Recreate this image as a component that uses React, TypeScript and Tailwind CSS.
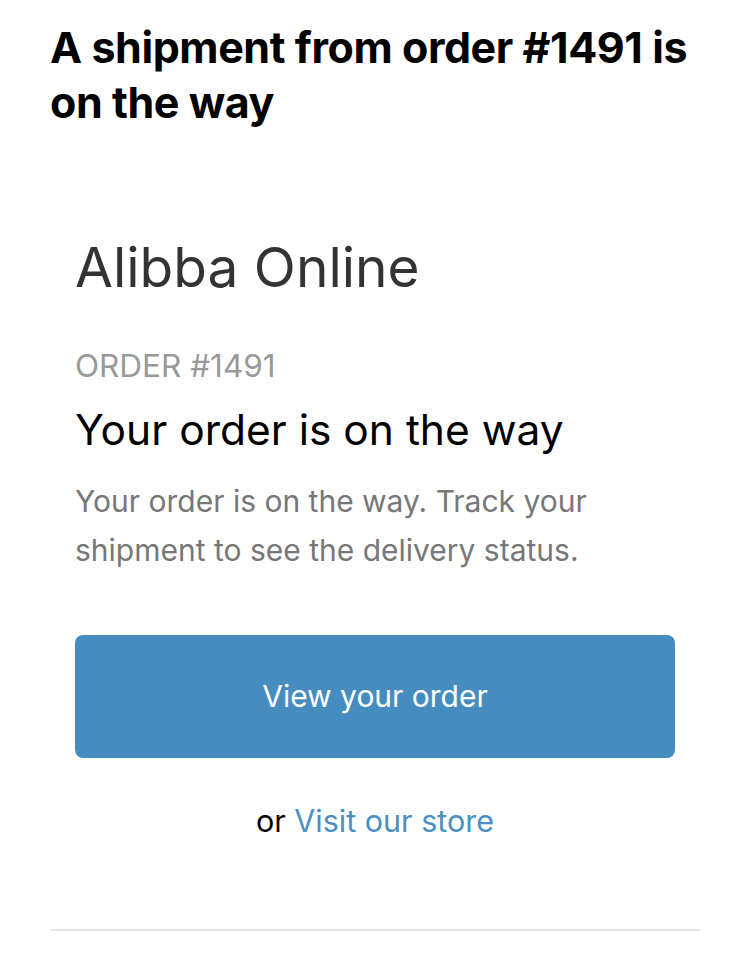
export default function App() {
  return (
    <div className="min-h-[958px] bg-white px-[50px] font-['Inter',sans-serif]">
      {/* subject */}
      <h1 className="pt-[20px] text-[43px] font-bold leading-[55px] tracking-[-0.01em] text-black">
        A shipment from order #1491 is on the way
      </h1>

      {/* email body */}
      <div className="mt-[103px] px-[25px]">
        <h2 className="text-[55px] leading-[68px] text-[#333]">Alibba Online</h2>

        <p className="mt-[45px] text-[31.5px] leading-[40px] text-[#999]">ORDER #1491</p>
        <h3 className="mt-[16px] text-[42.5px] leading-[56px] text-black">
          Your order is on the way
        </h3>
        <p className="mt-[19px] text-[30px] leading-[49px] text-[#777]">
          Your order is on the way. Track your shipment to see the delivery status.
        </p>

        <button className="mt-[60px] flex h-[123px] w-full items-center justify-center rounded-[8px] bg-[#468dbf] text-[30px] text-white">
          View your order
        </button>

        <p className="mt-[43px] text-center text-[30.5px] leading-[40px] text-black">
          or <a className="text-[#4a90c2]">Visit our store</a>
        </p>
      </div>

      <div className="mt-[88px] h-[2px] bg-[#e5e5e5]" />
    </div>
  );
}
